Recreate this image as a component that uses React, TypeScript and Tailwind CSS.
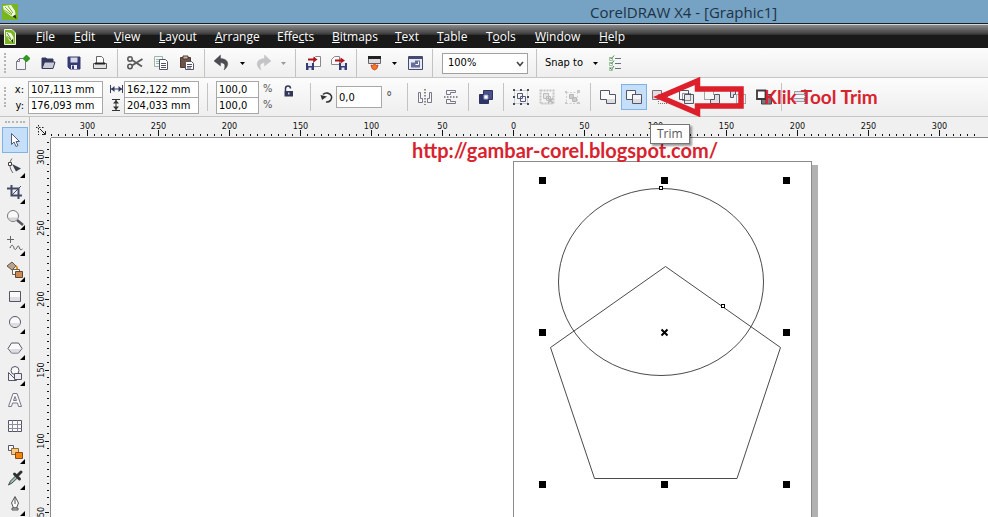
import React, { useEffect, useState } from 'react';
import clsx from 'clsx';

type IconProps = { children: React.ReactNode };

const Icon = ({ children }: IconProps) => (
    <svg viewBox="0 0 16 16" className="w-4 h-4 shrink-0 overflow-visible" fill="none" stroke="#55556a" aria-hidden="true">
        {children}
    </svg>
);

const icons = {
    newDoc: (
        <Icon>
            <path d="M2.5 14.5v-8l3-3h6v11z" fill="#f4f4f6" stroke="#77778a" />
            <path d="M2.5 6.5h3v-3" stroke="#77778a" />
            <path d="M12.5 0v7M9 3.5h7M10.5 1.5l4 4M14.5 1.5l-4 4" stroke="#2f9a1d" strokeWidth="1.8" />
        </Icon>
    ),
    open: (
        <Icon>
            <path d="M2 13V3h4l1 1h6v3" fill="#34385c" stroke="#34385c" />
            <path d="M2 13.5 4.500 7h10.500l-2 6.500z" fill="#c9ccd6" stroke="#34385c" />
        </Icon>
    ),
    save: (
        <Icon>
            <path d="M2 2h12v12H4l-2-2z" fill="#363b73" stroke="#363b73" />
            <path d="M4.500 2.500h7v5h-7z" fill="#d5d8e6" stroke="none" />
            <path d="M5 10h6v4H5z" fill="#eef" stroke="none" />
            <path d="M6 10.500h2V14H6z" fill="#363b73" stroke="none" />
        </Icon>
    ),
    print: (
        <Icon>
            <path d="M4.500 8.500v-7h5l2 2v5" fill="#fff" stroke="#666" />
            <path d="M1.500 8.500h13v5h-13z" fill="#e2e2e4" stroke="#555" />
            <path d="M3 8.500h10" stroke="#222" strokeWidth="2" />
        </Icon>
    ),
    cut: (
        <Icon>
            <circle cx="3" cy="4" r="2.200" stroke="#555" strokeWidth="1.500" />
            <circle cx="3" cy="11.500" r="2.200" stroke="#555" strokeWidth="1.500" />
            <path d="m5 5 10 6.500M5 10.500 15.500 4" stroke="#5d5d5d" strokeWidth="1.900" />
        </Icon>
    ),
    copy: (
        <Icon>
            <path d="M1.500 1.500h8v10h-8z" fill="#f4faf6" stroke="#9db5a8" />
            <path d="M3 4.500h5M3 6.500h5M3 8.500h5" stroke="#9db5a8" />
            <path d="M6.500 4.500h6l2 2v8h-8z" fill="#fff" />
            <path d="M8 8.500h5M8 10.500h5M8 12.500h5" />
        </Icon>
    ),
    paste: (
        <Icon>
            <path d="M1.500 2.500h10v10h-10z" fill="#6d5446" stroke="#4f3a30" />
            <path d="M4 1h5v3H4z" fill="#c8b9a5" stroke="#4f3a30" />
            <path d="M6.500 6.500h6l2 2v6h-8z" fill="#fff" />
            <path d="M8 9.500h5M8 11.500h5M8 13h4" />
        </Icon>
    ),
    undo: (
        <Icon>
            <path d="M6.500 0 0 6l6.500 5V7.800c4 0 5.500 2.200 3.500 7.200 5-3.500 6-11-3.500-11.500z" fill="#4b4b52" stroke="#4b4b52" strokeWidth=".5" />
        </Icon>
    ),
    redo: (
        <Icon>
            <path d="M9.500 0 16 6l-6.500 5V7.800C5.500 7.800 4 10 6 15 1 11.500 0 4 9.500 3.500z" fill="#c4c4c6" stroke="#c4c4c6" strokeWidth=".5" />
        </Icon>
    ),
    importFile: (
        <Icon>
            <path d="M8.500 11.500v-8l2-2h5v10z" fill="#fafafa" stroke="#888" />
            <path d="M1 8h8v7H1z" fill="#363b73" stroke="none" />
            <path d="M3 8h4v3H3zM3.500 12.500h3V15h-3z" fill="#e3e5f0" stroke="none" />
            <path d="M3 4.500h6" stroke="#b3121d" strokeWidth="2" />
            <path d="m8.500 1.500 4 3-4 3z" fill="#b3121d" stroke="none" />
        </Icon>
    ),
    exportFile: (
        <Icon>
            <path d="M.5 9.500v-5l3-3h5v8z" fill="#fafafa" stroke="#888" />
            <path d="M8 8h8v7H8z" fill="#363b73" stroke="none" />
            <path d="M10 8h4v3h-4zM10.500 12.500h3V15h-3z" fill="#e3e5f0" stroke="none" />
            <path d="M4 5.500h6" stroke="#b3121d" strokeWidth="2" />
            <path d="m9.500 2.500 4.500 3-4.500 3z" fill="#b3121d" stroke="none" />
        </Icon>
    ),
    launcher: (
        <Icon>
            <path d="M2.500 1.500h12v7h-12z" fill="#dcdce0" stroke="#666" />
            <path d="M2 2.500h13" stroke="#222" strokeWidth="3" />
            <path d="m5 10 2 .5 1.500-2 1.500 2 2-.5-1 3.500-2.500 1.500L6 13.500z" fill="#f07820" stroke="#c9301c" strokeWidth=".8" />
        </Icon>
    ),
    welcome: (
        <Icon>
            <path d="M1.500 1.500h14v13h-14z" fill="#e8eaf2" stroke="#444a72" />
            <path d="M1.500 3h14" stroke="#444a72" strokeWidth="2" />
            <path d="M4 12.500v-5h4v-2h5v7z" fill="#676c98" stroke="none" />
            <path d="M8.500 9.500h3v-3" stroke="#fff" />
        </Icon>
    ),
    options: (
        <Icon>
            <path d="m2 2.500 1.500 1.500L6 .5M2 7.500 3.500 9 6 5.500M2 13l1.500 1.500L6 11" stroke="#3d9440" />
            <path d="M7 3.500h6M7 8.500h6M7 13.500h6" stroke="#68707c" />
            <path d="M1.500 2.500h3v3h-3zM1.500 7.500h3v3h-3zM1.500 12.500h3v3h-3z" stroke="#85a98a" strokeWidth=".7" />
        </Icon>
    ),
    width: (
        <Icon>
            <path d="M2.500 4v8M14.500 4v8M3 8h11" stroke="#333b60" />
            <path d="M3 8l3.500-3v6zM14 8l-3.500-3v6z" fill="#333b60" stroke="none" />
        </Icon>
    ),
    height: (
        <Icon>
            <path d="M4 2.500h8M4 13.500h8M8 3v10" stroke="#333" />
            <path d="M8 3l3 3.500H5zM8 13l3-3.500H5z" fill="#333" stroke="none" />
        </Icon>
    ),
    lock: (
        <Icon>
            <path d="M4.500 8V5.500a2.500 2.500 0 0 1 5 0" stroke="#333758" strokeWidth="1.500" />
            <path d="M3.500 8h8.500v5.500H3.500z" fill="#333758" stroke="none" />
            <path d="M7 9.500h1.500v2H7z" fill="#c5c7de" stroke="none" />
        </Icon>
    ),
    rotate: (
        <Icon>
            <path d="M4 5.500a5 4.500 0 1 1 3 7.500" stroke="#333" strokeWidth="1.600" />
            <path d="M1.500 6 8 7.500 3 11z" fill="#333" stroke="none" />
        </Icon>
    ),
    mirrorH: (
        <Icon>
            <path d="M1.500 3.500h2v6h2v4h-4zM14.500 3.500h-2v6h-2v4h4z" fill="#f7f7f8" stroke="#77778a" />
            <path d="M8 0v16" stroke="#222" strokeDasharray="1.500 1.500" />
        </Icon>
    ),
    mirrorV: (
        <Icon>
            <path d="M3.500 1.500h9v2h-5v2h-4zM3.500 14.500h9v-2h-5v-2h-4z" fill="#f7f7f8" stroke="#77778a" />
            <path d="M1 8h15" stroke="#222" strokeDasharray="1.500 1.500" />
        </Icon>
    ),
    order: (
        <Icon>
            <path d="M5.500 1.500h9v9h-9z" fill="#4a5088" stroke="#2e3360" />
            <path d="M1.500 5.500h9v9h-9z" fill="#2e3368" stroke="#2e3360" />
            <path d="M6 6h4v4H6z" fill="#fff" stroke="#9aa0d0" />
        </Icon>
    ),
    group: (
        <Icon>
            <path d="M1.500 1.500h13v13h-13z" stroke="#aaa" strokeDasharray="1 1" />
            <path d="M4.500 4.500h5v5h-5zM7.500 7.500h5v5h-5z" fill="#f5f5f8" stroke="#555a78" />
            <path d="M0 0h2v2H0zM7 0h2v2H7zM14 0h2v2h-2zM0 14h2v2H0zM7 14h2v2H7zM14 14h2v2h-2zM0 7h2v2H0zM14 7h2v2h-2z" fill="#444a62" stroke="none" />
        </Icon>
    ),
    ungroup: (
        <Icon>
            <path d="M1.500 1.500h13v13h-13z" stroke="#c4c4c4" strokeWidth="2" strokeDasharray="2 1" />
            <path d="M4.500 4.500h5v5h-5zM7.500 7.500h4v4h-4z" fill="#e5e5e5" stroke="#bbb" />
            <path d="m9 9 5 5M14 9l-5 5" stroke="#b4b4b4" strokeWidth="1.500" />
        </Icon>
    ),
    ungroupAll: (
        <Icon>
            <path d="M1.500 3.500h11v11h-11z" stroke="#cfcfcf" strokeDasharray="2 1.500" />
            <path d="M4.500 5.500h4v4h-4zM7.500 8.500h4v4h-4z" fill="#ccc" stroke="#b8b8b8" />
            <path d="M0 2h2v2H0zM12 1h3v3h-3zM0 13h2v2H0zM12 13h3v2h-3z" fill="#c8c8c8" stroke="none" />
        </Icon>
    ),
    weld: (
        <Icon>
            <path d="M.5 1.500h9v4h6v9h-9v-4h-6z" fill="#fafafa" />
            <path d="M7 10h8v4H7z" fill="#dedee2" stroke="none" />
        </Icon>
    ),
    trim: (
        <Icon>
            <path d="M.5 1.500h9v4h-3v5h-6z" fill="#fafafa" />
            <path d="M6.500 5.500h9v9h-9z" fill="#f4f4f6" />
            <path d="M7 10h8v4H7z" fill="#dedee2" stroke="none" />
        </Icon>
    ),
    intersect: (
        <Icon>
            <path d="M.5 1.500h9v4h-3v5h-6z" fill="#e6dcdf" stroke="#77707e" />
            <path d="M6.500 10v4.500h9v-9h-6" stroke="#777" strokeDasharray="1 1" />
        </Icon>
    ),
    simplify: (
        <Icon>
            <path d="M1.500 1.500h9v9h-9z" fill="#fafafa" />
            <path d="M6.500 5.500h9v9h-9z" fill="#e8e8ec" />
            <path d="M4.500 4.500h8v7h-8z" stroke="#333" strokeDasharray="1 1" />
        </Icon>
    ),
    frontMinusBack: (
        <Icon>
            <path d="M.5 1.500h9v4M.5 1.500v9h6" stroke="#555" strokeDasharray="1 1" />
            <path d="M10.500 5.500h5v9h-9v-4h4z" fill="#dedee2" />
        </Icon>
    ),
    backMinusFront: (
        <Icon>
            <path d="M.5 1.500h5v4h-2v3h-3z" fill="#dedee2" />
            <path d="M6.500 5.500h9v9h-9z" stroke="#555" strokeDasharray="1 1" />
        </Icon>
    ),
    boundary: (
        <Icon>
            <path d="M5.500 5.500h10v9.500h-10z" fill="#777a80" stroke="#444" />
            <path d="M1 1.500h8.500v8.500H1z" fill="#fff" stroke="#3a3a40" strokeWidth="1.800" />
        </Icon>
    ),
    align: (
        <Icon>
            <path d="M3.500 2.500h10v3h-10zM1.500 9.500h12v3h-12z" fill="#e4e4e8" stroke="#99a" />
            <path d="M14 0v16" stroke="#444" strokeDasharray="1 1" />
        </Icon>
    ),
};

const toolIcons = {
    pick: (
        <Icon>
            <path d="M4.500 1.500v11l2.500-2.500 2 4.500 2-1-2-4h3.500z" fill="#fff" stroke="#555b78" />
        </Icon>
    ),
    shape: (
        <Icon>
            <path d="M5 .5C2 4 2 10 6 15" stroke="#666" />
            <path d="M1.500 4.500h3v3h-3z" fill="#fff" stroke="#444" />
            <path d="m5 6 9 4.500-5 3z" fill="#3c4050" stroke="none" />
        </Icon>
    ),
    crop: (
        <Icon>
            <path d="M4.500 1v10.500H15M0 4.500h11.500V15" stroke="#444a66" strokeWidth="2" />
            <path d="M4 12 14 2" stroke="#444a66" />
        </Icon>
    ),
    zoom: (
        <Icon>
            <path d="m10 10 6 5" stroke="#55555c" strokeWidth="2.500" />
            <circle cx="6" cy="6" r="5.500" fill="#fafafa" stroke="#777" />
            <path d="M1.500 7.500h9C9.500 12 2.500 12 1.500 7.500z" fill="#d4d4d8" stroke="none" />
        </Icon>
    ),
    freehand: (
        <Icon>
            <path d="M3.500 0v7M0 3.500h7" stroke="#666" />
            <path d="M3 12c2-5 3.500-2 4 0s2 2 3-.5 2-1.500 2.500.5 1.500 2 3 1" stroke="#555" />
        </Icon>
    ),
    smartFill: (
        <Icon>
            <path d="m0 4 5-4 4 4-4 4z" fill="#b8a28c" stroke="#665548" />
            <path d="M9 4c1.500 1 1 2 1 4" stroke="#e08a22" strokeWidth="2" />
            <path d="M5.500 7.500h7v5h-7z" fill="#fff" stroke="#665" />
            <path d="M8.500 9.500h7v6h-7z" fill="#c98a55" stroke="#6b4527" />
        </Icon>
    ),
    rectangle: (
        <Icon>
            <path d="M2.500 3.500h11v10h-11z" fill="#fafafa" />
            <path d="M3 9h10v4H3z" fill="#dedee2" stroke="none" />
        </Icon>
    ),
    ellipse: (
        <Icon>
            <circle cx="8" cy="8" r="5.500" fill="#fafafa" />
            <path d="M3 9h10c-1 5-9 5-10 0z" fill="#dedee2" stroke="none" />
        </Icon>
    ),
    polygon: (
        <Icon>
            <path d="M4.500 3h7L15 8.500 11.500 13h-7L1 8.500z" fill="#fafafa" />
            <path d="M2 9h12l-2.500 3.500h-7z" fill="#dedee2" stroke="none" />
        </Icon>
    ),
    basicShapes: (
        <Icon>
            <path d="M1.500 6.500v8h8z" fill="#f5f5f7" />
            <circle cx="8" cy="4.500" r="4" fill="#fafafa" />
            <path d="M7.500 7.500h7v6h-7z" fill="#ededf0" />
        </Icon>
    ),
    text: (
        <Icon>
            <path d="M1.500 14.500 6 1.500h4l4.500 13h-3L10.500 11h-5l-1 3.500z" fill="#fafafa" stroke="#77778c" />
            <path d="M6.500 8.500h3L8 4.500z" fill="#eee" stroke="#77778c" />
        </Icon>
    ),
    table: (
        <Icon>
            <path d="M1.500 2.500h13v11h-13z" fill="#fafafa" />
            <path d="M1.500 6.500h13M1.500 10.500h13M5.500 2.500v11M10.500 2.500v11" stroke="#8c8c9c" />
        </Icon>
    ),
    blend: (
        <Icon>
            <path d="M1.500 1.500h5v5h-5z" fill="#fff" />
            <path d="M4.500 4.500h7v6h-7z" fill="#f7c981" stroke="#8f6a3c" />
            <path d="M8.500 8.500h7v6h-7z" fill="#f5820f" stroke="#8a4a13" />
        </Icon>
    ),
    eyedropper: (
        <Icon>
            <path d="m1.500 15 2-4L9 5.500 11 7.500 5 13z" fill="#9dc0b4" stroke="#3f4a48" />
            <path d="m7.500 4 5 5M10 6l4-4" stroke="#2e3032" strokeWidth="3" strokeLinecap="round" />
        </Icon>
    ),
    outline: (
        <Icon>
            <path d="M8 .5 4.500 7l2 5h3l2-5z" fill="#fafafa" stroke="#555" />
            <path d="M8 1v7M5 14h6v-2H5z" fill="#ccc" stroke="#555" />
        </Icon>
    ),
};

const menus = [
    { key: 'F', before: '', after: 'ile', width: 'w-[38px]' },
    { key: 'E', before: '', after: 'dit', width: 'w-[40px]' },
    { key: 'V', before: '', after: 'iew', width: 'w-[45px]' },
    { key: 'L', before: '', after: 'ayout', width: 'w-[56px]' },
    { key: 'A', before: '', after: 'rrange', width: 'w-[62px]' },
    { key: 'c', before: 'Effe', after: 'ts', width: 'w-[55px]' },
    { key: 'B', before: '', after: 'itmaps', width: 'w-[63px]' },
    { key: 'T', before: '', after: 'ext', width: 'w-[42px]' },
    { key: 'T', before: '', after: 'able', width: 'w-[49px]' },
    { key: 'o', before: 'T', after: 'ols', width: 'w-[49px]' },
    { key: 'W', before: '', after: 'indow', width: 'w-[64px]' },
    { key: 'H', before: '', after: 'elp', width: 'w-[45px]' },
];

const tools = [
    { name: 'Pick', icon: toolIcons.pick, flyout: false, active: true },
    { name: 'Shape', icon: toolIcons.shape, flyout: true },
    { name: 'Crop', icon: toolIcons.crop, flyout: true },
    { name: 'Zoom', icon: toolIcons.zoom, flyout: true },
    { name: 'Freehand', icon: toolIcons.freehand, flyout: true },
    { name: 'Smart fill', icon: toolIcons.smartFill, flyout: true },
    { name: 'Rectangle', icon: toolIcons.rectangle, flyout: true },
    { name: 'Ellipse', icon: toolIcons.ellipse, flyout: true },
    { name: 'Polygon', icon: toolIcons.polygon, flyout: true },
    { name: 'Basic shapes', icon: toolIcons.basicShapes, flyout: true },
    { name: 'Text', icon: toolIcons.text, flyout: false },
    { name: 'Table', icon: toolIcons.table, flyout: false },
    { name: 'Blend', icon: toolIcons.blend, flyout: true },
    { name: 'Eyedropper', icon: toolIcons.eyedropper, flyout: true },
    { name: 'Outline', icon: toolIcons.outline, flyout: true },
];

type ToolButtonProps = { name: string; icon: React.ReactNode; active?: boolean; flyout?: boolean };

const ToolButton = ({ name, icon, active, flyout }: ToolButtonProps) => (
    <button
        type="button"
        aria-label={name}
        className={clsx(
            'relative w-[26px] h-[26px] shrink-0 flex items-center justify-center border',
            active ? 'bg-[#c5dff8] border-[#7fb2e5]' : 'border-transparent'
        )}
    >
        {icon}
        {flyout && (
            <svg viewBox="0 0 5 5" className="absolute right-0.5 bottom-0 w-[5px] h-[5px]" aria-hidden="true">
                <path d="M5 0v5H0z" fill="#000" />
            </svg>
        )}
    </button>
);

const Separator = () => (
    <div className="w-[9px] h-7 shrink-0 flex justify-center">
        <div className="w-px bg-[#c3c3c3]" />
    </div>
);

const Grip = () => (
    <div className="w-[9px] h-5 shrink-0 flex justify-center">
        <div className="border-l-2 border-dotted border-[#b5b5b5]" />
    </div>
);

const Caret = ({ name, muted }: { name: string; muted?: boolean }) => (
    <button type="button" aria-label={name} className="w-[15px] h-[26px] shrink-0 flex items-center justify-center">
        <svg viewBox="0 0 5 3" className="w-[5px] h-[3px]" aria-hidden="true">
            <path d="M0 0h5L2.500 3z" fill={muted ? '#999' : '#000'} />
        </svg>
    </button>
);

const Field = ({ label, value, className }: { label: string; value: string; className: string }) => (
    <input
        aria-label={label}
        defaultValue={value}
        className={clsx('block bg-white border border-[#a8a8a8] px-0.5 text-[11px] leading-[14px] text-black', className)}
    />
);

const StandardToolbar = () => (
    <div className="h-[30px] shrink-0 flex items-center pt-px bg-linear-to-b from-[#fcfcfc] to-[#eeeeee] border-b border-[#c6c6c6]">
        <Grip />
        <ToolButton name="New" icon={icons.newDoc} />
        <ToolButton name="Open" icon={icons.open} />
        <ToolButton name="Save" icon={icons.save} />
        <ToolButton name="Print" icon={icons.print} />
        <Separator />
        <ToolButton name="Cut" icon={icons.cut} />
        <ToolButton name="Copy" icon={icons.copy} />
        <ToolButton name="Paste" icon={icons.paste} />
        <Separator />
        <ToolButton name="Undo" icon={icons.undo} />
        <Caret name="Undo list" />
        <ToolButton name="Redo" icon={icons.redo} />
        <Caret name="Redo list" muted />
        <Separator />
        <ToolButton name="Import" icon={icons.importFile} />
        <ToolButton name="Export" icon={icons.exportFile} />
        <Separator />
        <ToolButton name="Application launcher" icon={icons.launcher} />
        <Caret name="Application list" />
        <ToolButton name="Welcome screen" icon={icons.welcome} />
        <Separator />
        <div className="relative ml-[5px] mr-1">
            <select
                aria-label="Zoom level"
                defaultValue="100%"
                className="block appearance-none w-[86px] h-[21px] bg-white border border-[#a0a0a0] pl-[5px] text-[11px] text-black"
            >
                <option>50%</option>
                <option>100%</option>
                <option>200%</option>
            </select>
            <svg viewBox="0 0 8 6" className="absolute right-1 top-2 w-2 h-1.5 pointer-events-none" fill="none" aria-hidden="true">
                <path d="m1 1 3 3.500L7 1" stroke="#444" strokeWidth="1.600" />
            </svg>
        </div>
        <Separator />
        <button type="button" className="w-[47px] shrink-0 pl-1 text-left text-[11px] whitespace-nowrap text-black">Snap to</button>
        <Caret name="Snap list" />
        <ToolButton name="Options" icon={icons.options} />
    </div>
);

const PropertyBar = () => (
    <div className="h-[39px] shrink-0 flex items-center bg-linear-to-b from-[#fcfcfc] to-[#eeeeee] border-b border-[#c6c6c6]">
        <Grip />
        <div className="w-[19px] shrink-0 flex flex-col items-end pt-0.5 pr-1 text-[11px] leading-4 text-black">
            <span>x:</span>
            <span>y:</span>
        </div>
        <div className="flex flex-col">
            <Field label="X position" value="107,113 mm" className="w-[75px] h-[17px]" />
            <Field label="Y position" value="176,093 mm" className="w-[75px] h-[17px] -mt-px" />
        </div>
        <div className="w-[21px] shrink-0 flex flex-col items-center pl-1">
            {icons.width}
            {icons.height}
        </div>
        <div className="flex flex-col">
            <Field label="Width" value="162,122 mm" className="w-[75px] h-[17px]" />
            <Field label="Height" value="204,033 mm" className="w-[75px] h-[17px] -mt-px" />
        </div>
        <div className="px-1"><Separator /></div>
        <div className="flex flex-col">
            <Field label="Horizontal scale" value="100,0" className="w-[43px] h-[17px]" />
            <Field label="Vertical scale" value="100,0" className="w-[43px] h-[17px] -mt-px" />
        </div>
        <div className="w-[17px] shrink-0 flex flex-col pl-1 text-[11px] leading-4 text-[#555]">
            <span>%</span>
            <span>%</span>
        </div>
        <div className="pb-3"><ToolButton name="Nonproportional scaling" icon={icons.lock} /></div>
        <div className="pl-1"><Separator /></div>
        <div className="pl-1 pr-px">{icons.rotate}</div>
        <Field label="Rotation" value="0,0" className="w-[46px] h-[22px]" />
        <span className="w-[21px] shrink-0 pl-1 text-[14px] leading-5 text-[#555]">°</span>
        <Separator />
        <ToolButton name="Mirror horizontally" icon={icons.mirrorH} />
        <ToolButton name="Mirror vertically" icon={icons.mirrorV} />
        <Separator />
        <ToolButton name="Order" icon={icons.order} />
        <Separator />
        <ToolButton name="Group" icon={icons.group} />
        <ToolButton name="Ungroup" icon={icons.ungroup} />
        <ToolButton name="Ungroup all" icon={icons.ungroupAll} />
        <Separator />
        <ToolButton name="Weld" icon={icons.weld} />
        <ToolButton name="Trim" icon={icons.trim} active />
        <ToolButton name="Intersect" icon={icons.intersect} />
        <ToolButton name="Simplify" icon={icons.simplify} />
        <ToolButton name="Front minus back" icon={icons.frontMinusBack} />
        <ToolButton name="Back minus front" icon={icons.backMinusFront} />
        <ToolButton name="Create boundary" icon={icons.boundary} />
        <Separator />
        <ToolButton name="Align and distribute" icon={icons.align} />
    </div>
);

// 50 mm on the ruler is 71 px on screen
const SCALE = 1.42;

const useWindowSize = () => {
    const [size, setSize] = useState({ width: window.innerWidth, height: window.innerHeight });

    useEffect(() => {
        const onResize = () => setSize({ width: window.innerWidth, height: window.innerHeight });
        window.addEventListener('resize', onResize);
        return () => window.removeEventListener('resize', onResize);
    }, []);

    return size;
};

// every fifth millimetre between two values
const marks = (from: number, to: number) => {
    const values: number[] = [];
    for (let v = Math.ceil(from / 5) * 5; v <= to; v += 5) values.push(v);
    return values;
};

const HorizontalRuler = () => {
    const { width } = useWindowSize();

    return (
        <svg className="block w-full h-5" shapeRendering="crispEdges" fontSize="9" textAnchor="middle">
            {marks(-325, (width - 520) / SCALE).map(v => {
                const x = Math.floor(462 + v * SCALE);
                const major = v % 50 === 0;
                return (
                    <g key={v}>
                        <rect x={x} y={major ? 13 : 17} width="1" height={major ? 6 : 2} fill="#111" />
                        {major && <text x={x + 0.5} y="12" fill="#111">{Math.abs(v)}</text>}
                    </g>
                );
            })}
        </svg>
    );
};

const VerticalRuler = () => {
    const { height } = useWindowSize();

    return (
        <svg className="block w-5 h-full" shapeRendering="crispEdges" fontSize="9" textAnchor="middle">
            {marks(300 - (height - 158) / SCALE, 310).map(v => {
                const y = Math.floor(19 + (300 - v) * SCALE);
                const major = v % 50 === 0;
                return (
                    <g key={v}>
                        <rect x={major ? 15 : 17} y={y} width={major ? 4 : 2} height="1" fill="#111" />
                        {major && <text transform={`translate(14 ${y}) rotate(-90)`} fill="#111">{Math.abs(v)}</text>}
                    </g>
                );
            })}
        </svg>
    );
};

const Drawing = () => (
    <svg className="block w-full h-full" fill="none">
        <g transform="translate(462 23)">
            <rect x="299" y="4" width="6" height="900" fill="#b2b2b2" />
            <rect x=".5" y=".5" width="298" height="904" fill="#fff" stroke="#8c8c8c" />
            <ellipse cx="148" cy="121" rx="102.500" ry="93.500" stroke="#4a4a4a" />
            <path d="M152.500 105.500 267.500 186.500 224 317.500H81.500L37.500 186.500z" stroke="#4a4a4a" />
            {[26, 148, 270].map(x =>
                [16, 168, 320].map(y => {
                    if (x === 148 && y === 168) return null;
                    return <rect key={`${x}-${y}`} x={x} y={y} width="7" height="7" fill="#000" />;
                })
            )}
            <path d="m148.500 168.500 6 6m0-6-6 6" stroke="#000" strokeWidth="2" />
            <rect x="146.500" y="25.500" width="3" height="3" fill="#fff" stroke="#000" />
            <rect x="208.500" y="143.500" width="3" height="3" fill="#fff" stroke="#000" />
        </g>
    </svg>
);

const Logo = () => (
    <svg viewBox="0 0 16 16" className="w-4 h-4 shrink-0" aria-hidden="true">
        <path d="M0 0h16v16H0z" fill="#79b51f" />
        <path d="m1 2 8-1 4 6 1 7-5-2-7-5z" fill="#f3f8e4" />
        <path d="m3 3 7 7M6 2l5 7M2 6l8 5" stroke="#79b51f" />
        <path d="m10.500 12.500 3-2 1 4.500z" fill="#20300c" />
    </svg>
);

const DocumentLogo = () => (
    <svg viewBox="0 0 12 16" className="w-3 h-4 shrink-0" aria-hidden="true">
        <path d="M.5.5h7.500l3.500 3.500v11.500H.5z" fill="#79b51f" stroke="#f2f2ee" />
        <path d="m2 3 5 1 2.500 4v5L6 12 2 7z" fill="#f3f8e4" />
        <path d="m3 4 4 6M2.500 7 7 11" stroke="#5f9418" />
        <path d="m7 11.500 2-1.500v4z" fill="#20300c" />
    </svg>
);

const App = () => {
    return (
        <div className="relative h-screen flex flex-col overflow-hidden bg-[#f0f0f0] font-['DejaVu_Sans_Condensed','DejaVu_Sans',sans-serif]">
            <header className="shrink-0 font-['Open_Sans',sans-serif]">
                <div className="relative h-6 flex items-center bg-[#76a2c3] border-b border-[#14202b] pl-0.5">
                    <Logo />
                    <h1 className="absolute left-[590px] top-0 text-[15px] leading-6 whitespace-nowrap text-[#1c3346]">CorelDRAW X4 - [Graphic1]</h1>
                </div>
                <nav className="h-6 flex items-center border-t border-[#d8d8d8] bg-linear-to-b from-[#8c8c8c] from-0% via-[#3c3c3c] via-40% to-[#191919] to-45% pl-1">
                    <DocumentLogo />
                    <div className="flex pl-5">
                        {menus.map(m => (
                            <button key={m.before + m.key + m.after} type="button" className={clsx('shrink-0 text-left text-[12px] leading-5 whitespace-nowrap text-white', m.width)}>
                                {m.before}<u>{m.key}</u>{m.after}
                            </button>
                        ))}
                    </div>
                </nav>
            </header>
            <StandardToolbar />
            <PropertyBar />
            <main className="flex-1 min-h-0 flex">
                <aside className="w-[30px] shrink-0 overflow-hidden flex flex-col items-center pt-1 border-r border-[#c0c0c0]">
                    <div className="w-5 h-1.5 shrink-0 border-t-2 border-dotted border-[#b5b5b5]" />
                    {tools.map(t => <ToolButton key={t.name} {...t} />)}
                </aside>
                <div className="relative flex-1 min-w-0 grid grid-cols-[21px_1fr] grid-rows-[21px_1fr]">
                    <div className="flex items-center justify-center pt-1">
                        <svg viewBox="0 0 10 10" className="w-2.5 h-2.5" fill="none" stroke="#222" aria-hidden="true">
                            <path d="M0 2.500h8M2.500 0v10" strokeDasharray="1.500 1.500" />
                            <path d="m4 4 5 5M9.500 6v3.500H6" />
                        </svg>
                    </div>
                    <div className="border-b border-[#8a8a8a] overflow-hidden">
                        <HorizontalRuler />
                    </div>
                    <div className="border-r border-[#8a8a8a] overflow-hidden">
                        <VerticalRuler />
                    </div>
                    <div className="bg-white overflow-hidden">
                        <Drawing />
                    </div>
                    <p className="absolute left-[382px] top-[21px] font-['Lato',sans-serif] font-bold text-[20px] leading-6 text-[#d8232e]">
                        http://gambar-corel.blogspot.com/
                    </p>
                    <div role="tooltip" className="absolute left-[620px] top-[7px] px-1.5 border border-[#767676] bg-white shadow-[2px_2px_2px_rgba(0,0,0,0.4)] font-['Open_Sans',sans-serif] text-[12px] leading-[18px] text-[#575757]">
                        Trim
                    </div>
                </div>
            </main>
            <svg viewBox="0 0 94 42" className="absolute left-[652px] top-[76px] w-[94px] h-[42px] pointer-events-none" fill="none" aria-hidden="true">
                <path d="M8 21 45.500 5v8H89v17H45.500V37z" stroke="#dc1f2a" strokeWidth="5.500" />
            </svg>
            <p className="absolute left-[764px] top-[85px] font-['Lato',sans-serif] font-bold text-[19px] leading-6 text-[#d8232e]">Klik Tool Trim</p>
        </div>
    );
};

export default App;
